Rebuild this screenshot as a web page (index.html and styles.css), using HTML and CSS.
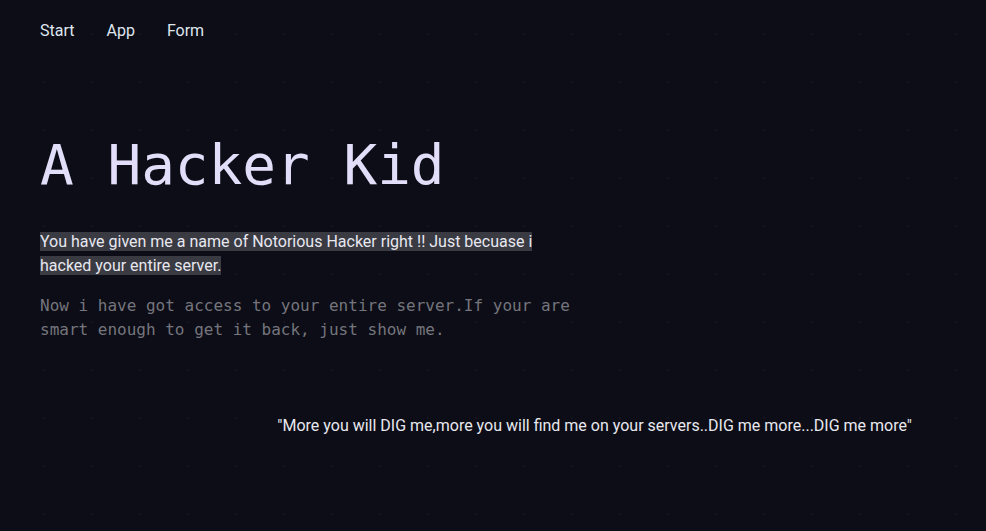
FILE: index.html
```html
<!DOCTYPE html>
<html lang="en">
<head>
<meta charset="utf-8">
<title>A Hacker Kid</title>
<link rel="stylesheet" href="styles.css">
</head>
<body>
  <nav class="nav">
    <a class="nav-link" href="#">Start</a>
    <a class="nav-link" href="#">App</a>
    <a class="nav-link" href="#">Form</a>
  </nav>
  <main class="main">
    <h1 class="title">A Hacker Kid</h1>
    <p class="intro"><span class="mark">You have given me a name of Notorious Hacker right !! Just becuase i hacked your entire server.</span></p>
    <p class="mono">Now i have got access to your entire server.If your are smart enough to get it back, just show me.</p>
    <p class="quote">"More you will DIG me,more you will find me on your servers..DIG me more...DIG me more"</p>
  </main>
</body>
</html>
```
FILE: styles.css
```css
html, body {
  margin: 0;
  padding: 0;
}
body {
  background-color: #0c0d16;
  background-image: radial-gradient(circle, #13141e 1px, transparent 1.5px);
  background-size: 48px 48px;
  background-position: 20px 10px;
  min-height: 531px;
  font-family: Roboto, "Liberation Sans", sans-serif;
  color: #e6e6ee;
  padding: 19px 40px 0 40px;
  box-sizing: border-box;
}
.nav {
  display: flex;
  gap: 32px;
  line-height: 24px;
  font-size: 16px;
}
.nav-link {
  color: #dfe5ef;
  text-decoration: none;
}
.main {
  display: flex;
  flex-direction: column;
}
.title {
  margin: 88px 0 0 0;
  font-family: "DejaVu Sans Mono", monospace;
  font-weight: normal;
  font-size: 56px;
  line-height: 1.2;
  color: #e2def9;
}
.intro {
  margin: 32px 0 0 0;
  max-width: 520px;
  font-size: 16px;
  line-height: 24px;
}
.mark {
  background: #393a42;
  color: #e8e8f0;
}
.mono {
  margin: 16px 0 0 0;
  font-family: "DejaVu Sans Mono", monospace;
  font-size: 16px;
  line-height: 24px;
  color: #75757d;
  max-width: 540px;
}
.quote {
  margin: 72px 34px 0 0;
  text-align: right;
  font-size: 16px;
  line-height: 24px;
  color: #e8e8ef;
}
```
